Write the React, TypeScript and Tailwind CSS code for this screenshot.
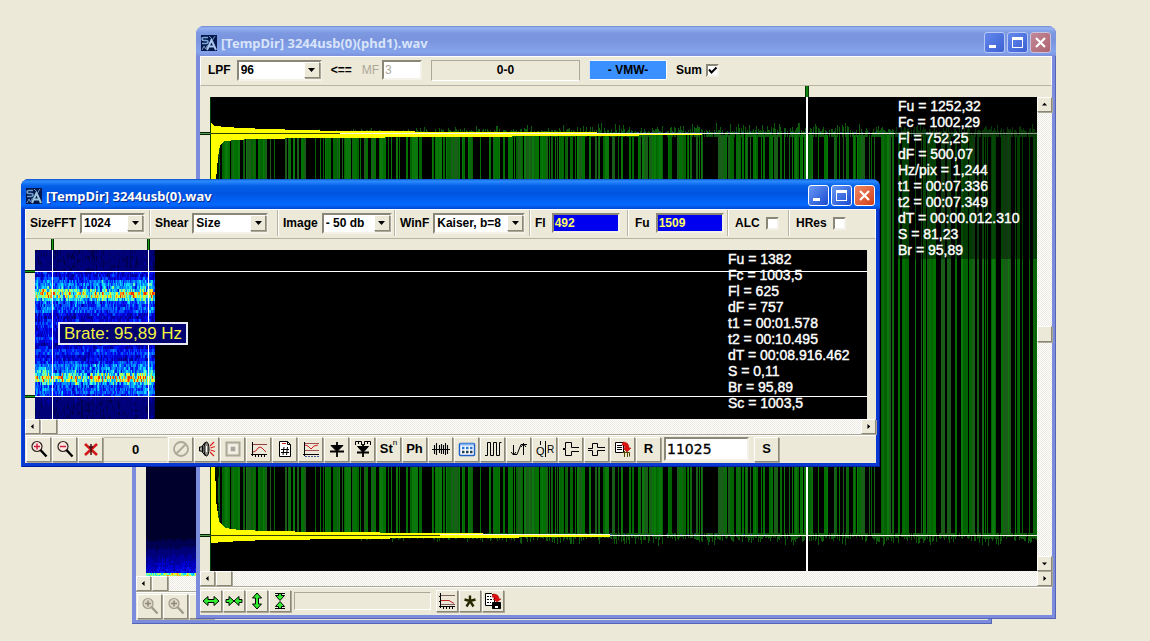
import React, { useId, useMemo } from 'react';

const raised = 'border border-t-white border-l-white border-r-[#8c8878] border-b-[#8c8878] bg-[#ece9d8] shadow-[1px_1px_0_#aca899]';
const sunken = 'border-2 border-t-[#8a8778] border-l-[#8a8778] border-r-[#f4f2e8] border-b-[#f4f2e8]';
const track = 'bg-[repeating-conic-gradient(#ffffff_0_25%,#ece9e0_0_50%)] bg-[length:2px_2px]';

function makeRandom(seed: number) {
  let s = seed;
  return () => {
    s = (s * 1664525 + 1013904223) % 4294967296;
    return s / 4294967296;
  };
}

/* ---------- drawings ---------- */

const HEAT = ['#00002c', '#000050', '#000078', '#0000a0', '#0000d0', '#0018f8', '#0058ff', '#0098ff', '#10d8ff', '#60ffc0', '#a8ff60', '#f0f020', '#ff9010', '#f03000'];

function heatPaths(width: number, height: number, cell: number, seed: number, level: (y: number, r: number, col: number) => number) {
  const rnd = makeRandom(seed);
  const paths: string[] = HEAT.map(() => '');
  let col = 0.5;
  const previous: number[] = [];
  for (let x = 0; x < width; x += 1) {
    col = col * 0.35 + rnd() * 0.65;
    for (let y = 0; y < height; y += cell) {
      const r = (previous[y] ?? 0.5) * 0.4 + rnd() * 0.6;
      previous[y] = r;
      const v = level(y, r, col);
      const i = Math.max(0, Math.min(HEAT.length - 1, Math.round(v * (HEAT.length - 1))));
      paths[i] += `M${x} ${y}h1v${cell}h-1z`;
    }
  }
  return paths;
}

const bump = (y: number, c: number, w: number) => Math.exp(-((y - c) * (y - c)) / (2 * w * w));

function Spectrogram() {
  const paths = useMemo(
    () =>
      heatPaths(120, 169, 3, 77, (y, r, col) => {
        const core = bump(y, 42, 4) + bump(y, 126, 4);
        const halo = bump(y, 43, 10) + bump(y, 127, 10);
        const quiet = y < 21 || y > 145;
        const floor = quiet ? 0.14 : 0.34;
        const stripe = quiet ? 0 : 0.06 * Math.sin(y / 2.2);
        return floor + stripe + halo * (0.08 + 0.26 * col) + core * (0.02 + 0.42 * r) + (r - 0.5) * (quiet ? 0.1 : 0.32) + (col - 0.5) * 0.08;
      }),
    []
  );
  return (
    <svg className="block h-full w-[120px]" viewBox="0 0 120 169" preserveAspectRatio="none" shapeRendering="crispEdges" aria-hidden="true">
      {paths.map((d, i) => (
        <path key={i} d={d} fill={HEAT[i]} />
      ))}
    </svg>
  );
}

function DarkSpectrogram() {
  const paths = useMemo(
    () =>
      heatPaths(60, 169, 2, 19, (y, r, col) => {
        const rise = Math.max(0, (y - 130) / 37);
        return 0.02 + rise * (0.26 + col * 0.12) + rise * (r - 0.4) * 0.2 + (y > 165 ? 0.28 + r * 0.2 : 0);
      }),
    []
  );
  return (
    <svg className="block h-full w-[60px]" viewBox="0 0 60 169" preserveAspectRatio="none" shapeRendering="crispEdges" aria-hidden="true">
      {paths.map((d, i) => (
        <path key={i} d={d} fill={HEAT[i]} />
      ))}
    </svg>
  );
}

const GREENS = ['#007000', '#185e18', '#006400', '#0a780a'];

function Waveform() {
  const { bars, tips } = useMemo(() => {
    const rnd = makeRandom(4242);
    const b = GREENS.map(() => '');
    let t = '';
    let on = false;
    let tone = 0;
    for (let x = 8; x < 827; x += 1) {
      const density = 0.56 + 0.16 * Math.sin(x / 17) + 0.12 * Math.sin(x / 6.3 + 1);
      const stay = rnd() < 0.3;
      if (!stay) {
        on = rnd() < density;
        tone = Math.floor(rnd() * GREENS.length);
      }
      if (on) b[tone] += `M${x} 38h1V438h-1z`;
      const amp = Math.min(1, x / 380);
      if (rnd() < 0.75) {
        const up = Math.round(1 + rnd() * rnd() * 10 * amp);
        const down = Math.round(1 + rnd() * rnd() * 10 * amp);
        t += `M${x} ${36 - up}h1V40h-1zM${x} 436h1V${439 + down}h-1z`;
      }
    }
    return { bars: b, tips: t };
  }, []);
  return (
    <svg className="block h-full w-full" viewBox="0 0 827 474" preserveAspectRatio="none" shapeRendering="crispEdges" aria-hidden="true">
      <path d={tips} fill="#0d5a0d" />
      {bars.map((d, i) => (
        <path key={i} d={d} fill={GREENS[i]} />
      ))}
      <path d="M0 60h9v320H0z" fill="#001400" />
      <rect x="685" y="0" width="142" height="162" fill="#000" opacity="0.4" />
      <path
        d="M0 25L5 29 30 31 90 33 130 34 280 35 492 36V38L240 40 110 41 40 42 15 44 10 48 8 60 6 83 5 200V363L6 403 9 425 15 431 30 433 60 434 110 435 230 436 400 438V440L220 441 140 442 60 443 30 444 0 446Z"
        fill="#ffff00"
      />
      <path d="M10.500 49L9 62 7.500 84V400L9.500 424" fill="none" stroke="#001800" strokeDasharray="2 1" />
      <path d="M0 0V474" stroke="#003c00" strokeWidth="1" />
      <path d="M0 36.500H130M0 438.500H230" stroke="#34400c" />
      <path d="M130 36.500H685M230 437.500H400M400 438.500H827" stroke="#f4f4e4" />
      <path d="M420 35.500H685M400 437.500H560" stroke="#3048b0" strokeDasharray="2 5" opacity="0.7" />
      <path d="M685 36.500H827" stroke="#8c988c" />
      <path d="M597 0V474" stroke="#ffffff" strokeWidth="2" />
    </svg>
  );
}

function AppIcon({ dim }: { dim?: boolean }) {
  return (
    <svg className="size-4 shrink-0" viewBox="0 0 16 16" fill="none" aria-hidden="true">
      <rect width="16" height="16" fill="#04184c" />
      <path d="M7 2.500H3Q1 2.500 1 4T3 5.500H5Q7 5.500 7 7T5 8.500H1" stroke={dim ? '#7ea8d8' : '#6c9cc8'} strokeWidth="1.500" />
      <path d="M6 15L10.500 5 15 15M8 11.500h5" stroke={dim ? '#a8c4ec' : '#9cc4dc'} strokeWidth="2" />
      <path d="M1 15L3 11 4.500 14 6.500 10M8 1l3 3M14 1l-2.500 4" stroke="#7098c0" />
    </svg>
  );
}

function Icon({ children }: { children: React.ReactNode }) {
  return (
    <svg className="size-[18px]" viewBox="0 0 18 18" fill="none" stroke="#000" strokeWidth="1" aria-hidden="true">
      {children}
    </svg>
  );
}

const Magnifier = ({ plus, off }: { plus?: boolean; off?: boolean }) => (
  <Icon>
    <circle cx="7" cy="6.500" r="5" stroke={off ? '#a09c8c' : '#302020'} fill={off ? '#dcd8c8' : '#fbe6e0'} strokeWidth="1.200" />
    <path d={plus || off ? 'M4 6.500h6M7 3.500v6' : 'M4 6.500h6'} stroke={off ? '#8c8878' : '#d02040'} strokeWidth="1.500" />
    <path d="M10.500 10L16.500 16.500" stroke={off ? '#a09c8c' : '#000'} strokeWidth="2.400" />
  </Icon>
);

const icons: Record<string, React.ReactNode> = {
  delete: (
    <Icon>
      <path d="M3 4L15 15M15 4L3 15" stroke="#d01818" strokeWidth="2.600" />
      <path d="M9 4v11M7 7h4" stroke="#401010" strokeWidth="1.500" />
    </Icon>
  ),
  ban: (
    <Icon>
      <circle cx="9" cy="9" r="7" stroke="#aca899" strokeWidth="1.800" />
      <path d="M4 14L14 4" stroke="#aca899" strokeWidth="1.800" />
    </Icon>
  ),
  speaker: (
    <Icon>
      <path d="M1.500 7h2l4-5v14l-4-5h-2z" fill="#a8a8a0" />
      <path d="M4.500 6v6" />
      <ellipse cx="8.500" cy="9" rx="2.500" ry="7" fill="#888880" />
      <path d="M8.500 6v6" stroke="#fff" />
      <path d="M12 6l4-4M12.500 8l4.500-1.500M12.500 10l4.500 1.500M12 12l4 4" stroke="#e02020" strokeWidth="1.200" />
    </Icon>
  ),
  stop: (
    <Icon>
      <rect x="2.500" y="2.500" width="13" height="13" stroke="#aca899" strokeWidth="2" />
      <rect x="6" y="6" width="6" height="6" stroke="#fff" fill="#aca899" />
    </Icon>
  ),
  curveUp: (
    <Icon>
      <path d="M2.500 2v14M1 14.500h16M5.500 14v3M8.500 14v3M11.500 14v3M14.500 14v3" />
      <path d="M3 4.500h14" stroke="#904040" />
      <path d="M3 12q3 0 5-4 2-2 4 0l4 4" stroke="#c02020" />
    </Icon>
  ),
  docHash: (
    <Icon>
      <path d="M3.500 1.500h8l3 3v12h-11z" fill="#fff" />
      <path d="M11.500 1.500v3h3" />
      <path d="M5 9.500h8M5 12.500h8M8 7l-1 8M11.500 7l-1 8" />
      <path d="M6 3.500h4" stroke="#d02020" />
    </Icon>
  ),
  curveDown: (
    <Icon>
      <path d="M2.500 2v14M1 14.500h16" />
      <path d="M3 16.500h14" stroke="#405890" strokeDasharray="2 1" />
      <path d="M3 3.500h14M3 10.500h14" stroke="#a05050" />
      <path d="M3 5l3 1 3 3 3-3 4-1" stroke="#d02020" />
    </Icon>
  ),
  diode: (
    <Icon>
      <path d="M9 2v15M2 11.500h14" strokeWidth="1.800" />
      <path d="M3 5.500h12l-6 6z" fill="#000" />
    </Icon>
  ),
  diodes: (
    <Icon>
      <path d="M1.500 5V1.500h6V5M4.500 1v3M10.500 5V1.500h6V5M13.500 1v3" />
      <path d="M9 4v13M3 12.500h12" strokeWidth="1.800" />
      <path d="M3.500 6.500h11l-5.500 6z" fill="#000" />
    </Icon>
  ),
  wave: (
    <Icon>
      <path d="M0 9.500h18M2.500 5v9M4.500 3v12M7.500 5v8M9.500 4v10M11.500 5v9M13.500 3v12M15.500 5v9" strokeWidth="1.100" />
    </Icon>
  ),
  table: (
    <Icon>
      <rect x="1.500" y="3.500" width="15" height="12" rx="1" fill="#fff" stroke="#2060c8" strokeWidth="1.500" />
      <path d="M2 4.500h14" stroke="#80b0f0" strokeWidth="2" />
      <path d="M4 8h2.500M8 8h2.500M12 8h2.500" stroke="#2878d8" strokeWidth="2.400" />
      <path d="M4 12h2.500M8 12h2.500M12 12h2.500" stroke="#203c50" strokeWidth="2.400" />
    </Icon>
  ),
  pulses: (
    <Icon>
      <path d="M1 15.500h2.500v-13h3v13h3v-13h3v13h3v-13h2" />
    </Icon>
  ),
  arrows: (
    <Icon>
      <path d="M3.500 5v10M1 12l2.500 3L6 12M3 14.500h4L11 4.500h6M13.500 15V3M11 7l2.500-3 2.500 3" />
    </Icon>
  ),
  iq: (
    <Icon>
      <path d="M4.500 1v4M9.500 1v16" />
      <text x="0" y="15" fontSize="11" fontWeight="400" stroke="none" fill="#000" fontFamily="Liberation Sans, sans-serif">Q</text>
      <text x="11" y="13" fontSize="10" fontWeight="400" stroke="none" fill="#000" fontFamily="Liberation Sans, sans-serif">R</text>
    </Icon>
  ),
  stepUp: (
    <Icon>
      <path d="M1 8.500h2.500v-6h6v5H17M1 9.500h2.500v6h6v-4H17" />
    </Icon>
  ),
  stepDown: (
    <Icon>
      <path d="M0 8.500h4.500v-5h5v4H17M0 10.500h4.500v5h5v-5H17" />
    </Icon>
  ),
  copy: (
    <Icon>
      <path d="M1.500 2.500h8v10h-8z" fill="#fff" />
      <path d="M3 5.500h5M3 7.500h5M3 9.500h5" />
      <path d="M9 2q6 0 6 6h2l-4 4-4-4h2q0-3-3-3z" fill="#e01010" stroke="#a00000" strokeWidth="0.500" />
      <path d="M8.500 12.500h7v4M10.500 11v6M13.500 12v5" stroke="#504800" />
    </Icon>
  ),
  save: (
    <Icon>
      <path d="M1.500 1.500h6l3 3v9h-9z" fill="#fff" />
      <path d="M3 4.500h4M3 7.500h5M3 10.500h4" strokeDasharray="2 1" />
      <path d="M9 2q6 0 6 5h2l-4 3-4-3h2q0-2-3-2z" fill="#e01010" stroke="#a00000" strokeWidth="0.500" />
      <path d="M8.500 10.500h8v6h-8z" fill="#000" />
      <path d="M11 15h3" stroke="#fff" strokeWidth="2" />
    </Icon>
  ),
  plot: (
    <Icon>
      <path d="M2.500 1v15M1 14.500h16M1 4.500h2M1 9.500h2M5.500 14v3M8.500 14v3M11.500 14v3M14.500 14v3" />
      <path d="M3 3.500h14M3 12.500h14" stroke="#806060" />
      <path d="M3 8.500h8l5 3" stroke="#c02020" />
    </Icon>
  ),
  star: (
    <Icon>
      <path d="M9 9V3.500M9 9L3.500 7.500M9 9l5.500-1.500M9 9l-3.500 5.500M9 9l3.500 5.500" stroke="#282800" strokeWidth="2.400" />
    </Icon>
  ),
  widen: (
    <Icon>
      <path d="M1 9l5-4.500V7.500h6V4.500L17 9l-5 4.500v-3H6v3z" fill="#30f030" />
    </Icon>
  ),
  narrow: (
    <Icon>
      <path d="M1 7.500h3V4.500L9 9l-5 4.500v-3H1zM17 7.500h-3V4.500L9 9l5 4.500v-3h3z" fill="#30f030" />
    </Icon>
  ),
  heighten: (
    <Icon>
      <path d="M9 1l4.500 5h-3v6h3L9 17l-4.500-5h3V6h-3z" fill="#30f030" />
    </Icon>
  ),
  lower: (
    <Icon>
      <path d="M7.500 1.500v2h-3L9 8.500l4.500-5h-3v-2zM7.500 16.500v-2h-3L9 9.500l4.500 5h-3v2z" fill="#30f030" />
      <path d="M4 1.500h10M4 16.500h10" />
    </Icon>
  ),
};

/* ---------- controls ---------- */

function Combo({ label, value, className }: { label: string; value: string; className: string }) {
  const id = useId();
  return (
    <>
      <label htmlFor={id}>{label}</label>
      <span className={`relative block h-[21px] ${sunken} ${className}`}>
        <select id={id} defaultValue={value} className="block h-[17px] w-full appearance-none bg-white pl-[2px] leading-[17px] outline-none">
          <option>{value}</option>
        </select>
        <span className={`pointer-events-none absolute right-0 top-0 flex h-4 w-4 items-center justify-center ${raised}`}>
          <svg className="h-1 w-[7px]" viewBox="0 0 7 4" aria-hidden="true"><path d="M0 0h7L3.500 4z" fill="#000" /></svg>
        </span>
      </span>
    </>
  );
}

function Field({ label, value, className, disabled }: { label: string; value: string; className: string; disabled?: boolean }) {
  const id = useId();
  return (
    <>
      <label htmlFor={id} className={disabled ? 'font-normal text-[#aca899]' : ''}>{label}</label>
      <input id={id} defaultValue={value} disabled={disabled} className={`h-5 min-w-0 pl-px outline-none ${sunken} ${className}`} />
    </>
  );
}

function Check({ label, checked, className }: { label: string; checked?: boolean; className?: string }) {
  return (
    <label className={`flex items-center ${className ?? ''}`}>
      {label}
      <span className="relative block size-[13px]">
        <input type="checkbox" defaultChecked={checked} className={`peer block size-[13px] appearance-none bg-white ${sunken}`} />
        <svg className="pointer-events-none absolute inset-0 hidden size-[13px] peer-checked:block" viewBox="0 0 13 13" aria-hidden="true">
          <path d="M3 5.500l2.500 3L10.500 3.500" fill="none" stroke="#000" strokeWidth="2" />
        </svg>
      </span>
    </label>
  );
}

function ToolButton({ name, children, small, disabled }: { name: string; children: React.ReactNode; small?: boolean; disabled?: boolean }) {
  return (
    <button
      type="button"
      aria-label={name}
      disabled={disabled}
      className={`flex shrink-0 items-center justify-center text-[13px] font-bold ${raised} ${small ? 'h-[22px] w-[22px]' : 'h-[25px] w-[25px]'}`}
    >
      {children}
    </button>
  );
}

const ARROWS = { left: 'M5 0v7L1 3.500z', right: 'M2 0v7l4-3.500z', up: 'M0 5h7L3.500 1z', down: 'M0 2h7L3.500 6z' };

function ScrollArrow({ dir }: { dir: keyof typeof ARROWS }) {
  return (
    <button type="button" aria-label={`Scroll ${dir}`} className={`flex size-[15px] shrink-0 items-center justify-center ${raised}`}>
      <svg className="size-[5px]" viewBox="0 0 7 7" aria-hidden="true"><path d={ARROWS[dir]} fill="#000" /></svg>
    </button>
  );
}

function HScroll() {
  return (
    <div className={`flex h-[15px] items-center ${track}`}>
      <ScrollArrow dir="left" />
      <div className={`ml-px h-[15px] w-4 ${raised}`} />
      <div className="flex-1" />
      <ScrollArrow dir="right" />
    </div>
  );
}

function CaptionButtons({ active }: { active?: boolean }) {
  const base = 'flex size-[21px] items-center justify-center rounded-[3px] border';
  const blue = active ? 'border-white bg-linear-to-br from-[#6a98f4] to-[#1c48d0]' : 'border-[#b8c8f4] bg-linear-to-br from-[#6488ec] to-[#3c60d4]';
  const red = active ? 'border-white bg-linear-to-br from-[#f08860] to-[#d03c14]' : 'border-[#c8c0dc] bg-linear-to-br from-[#c08898] to-[#b06470]';
  return (
    <div className="flex gap-[2px]">
      <button type="button" aria-label="Minimize" className={`${base} ${blue}`}>
        <svg className="size-[17px]" viewBox="0 0 17 17" aria-hidden="true"><path d="M3 11h7v3H3z" fill="#fff" /></svg>
      </button>
      <button type="button" aria-label="Maximize" className={`${base} ${blue}`}>
        <svg className="size-[17px]" viewBox="0 0 17 17" aria-hidden="true"><path d="M3 3h11v11H3zM4 6v7h9V6z" fill="#fff" fillRule="evenodd" /></svg>
      </button>
      <button type="button" aria-label="Close" className={`${base} ${red}`}>
        <svg className="size-[17px]" viewBox="0 0 17 17" aria-hidden="true"><path d="M4 4l9 9M13 4l-9 9" stroke="#fff" strokeWidth="2.200" /></svg>
      </button>
    </div>
  );
}

function Window({ title, active, className, children }: { title?: string; active?: boolean; className: string; children: React.ReactNode }) {
  const frame = active ? 'bg-[#0839d0] shadow-[inset_1px_0_0_#0a50e8,inset_-1px_-1px_0_#001ea0]' : 'bg-[#7b8cdc] shadow-[inset_-1px_-1px_0_#5564b8]';
  const bar = active
    ? 'bg-[linear-gradient(#0a50c8_0,#2c8cff_2px,#0560e8_7px,#0054e0_14px,#0468ff_26px,#0048d0_30px)] text-white [text-shadow:1px_1px_0_#06288c]'
    : 'bg-[linear-gradient(#7088d0_0,#98b4f4_2px,#7c98e0_7px,#7a94de_14px,#84a4ec_26px,#7c90dc_30px)] text-[#d8e4fa]';
  return (
    <section className={`absolute rounded-t-lg ${frame} ${className}`}>
      <header className={`flex h-[30px] items-center rounded-t-lg pl-[5px] pr-[5px] pt-[3px] ${bar}`}>
        {title && <AppIcon dim={!active} />}
        <h2 className="ml-[4px] flex-1 font-['Noto_Sans',sans-serif] text-[13px] font-bold leading-5">{title}</h2>
        <CaptionButtons active={active} />
      </header>
      <div className="mx-1 bg-[#ece9d8] text-black">{children}</div>
      <div className="h-1" />
    </section>
  );
}

function Readout({ lines }: { lines: string[] }) {
  return (
    <ul className="absolute right-0 top-px w-[139px] whitespace-nowrap text-[14px] font-normal leading-4 text-white [-webkit-text-stroke:0.4px_#fff]">
      {lines.map((l) => (
        <li key={l}>{l}</li>
      ))}
    </ul>
  );
}

const toolbar = 'flex h-[30px] items-center border border-t-white border-l-white border-r-white border-b-[#b8b4a4] pb-[2px]';
const group = 'flex h-[26px] shrink-0 items-center border-r border-[#b8b4a4] shadow-[1px_0_0_#fff]';
const bottomBar = 'flex h-[29px] items-center border-t border-[#aca899] shadow-[inset_0_1px_0_#fff]';

const lower: [string, React.ReactNode, boolean?][] = [
  ['Off', icons.ban, true],
  ['Sound', icons.speaker],
  ['Stop', icons.stop, true],
  ['Spectrum', icons.curveUp],
  ['Numbers', icons.docHash],
  ['Response', icons.curveDown],
  ['Detector', icons.diode],
  ['Multi detector', icons.diodes],
  ['Power', <span key="s" className="flex items-center"><span>St</span><span className="self-start text-[8px] font-normal leading-[8px]">n</span></span>],
  ['Phase', 'Ph'],
  ['Wave', icons.wave],
  ['Table', icons.table],
  ['Pulses', icons.pulses],
  ['Shift', icons.arrows],
  ['IQ', icons.iq],
  ['Step up', icons.stepUp],
  ['Step down', icons.stepDown],
  ['Copy', icons.copy],
];

export default function App() {
  return (
    <main className="relative min-h-screen overflow-hidden bg-[#ece9d8] font-['Liberation_Sans',Arial,sans-serif] text-[12px] font-bold text-black">
      <Window className="left-[132px] top-[336px] w-[860px]">
        <div className="h-[30px]" />
        <div className="h-[180px] pl-[10px] pr-[9px] pt-[11px]">
          <div className="h-full bg-black"><DarkSpectrogram /></div>
        </div>
        <HScroll />
        <div className={`${bottomBar} gap-px pl-px`}>
          <ToolButton name="Zoom in" disabled><Magnifier off /></ToolButton>
          <ToolButton name="Zoom out" disabled><Magnifier off /></ToolButton>
          <ToolButton name="Delete" disabled>{null}</ToolButton>
        </div>
      </Window>

      <Window title="[TempDir] 3244usb(0)(phd1).wav" className="left-[196px] top-[26px] w-[860px]">
        <div className={`${toolbar} pl-[7px]`}>
          <div className="flex items-center gap-[6px]">
            <Combo label="LPF" value="96" className="w-[85px]" />
          </div>
          <span className="ml-[9px]">&lt;==</span>
          <div className="ml-[10px] flex items-center gap-[3px]">
            <Field label="MF" value="3" disabled className="w-[40px] bg-white font-normal text-[#aca899]" />
          </div>
          <output className="ml-[9px] h-[21px] w-[149px] border border-b-white border-l-[#aca899] border-r-[#aca899] border-t-[#aca899] text-center leading-[19px]">0-0</output>
          <button type="button" className="ml-[9px] h-5 w-[78px] border border-b-white border-l-[#d8e4f0] border-r-white border-t-[#f4f4f4] bg-[#3b90ff] leading-[18px]">- VMW-</button>
          <Check label="Sum" checked className="ml-[9px] gap-[4px]" />
        </div>
        <div className="relative flex h-[485px] pl-[10px] pt-[11px]">
          <div className="relative min-w-0 flex-1 bg-black">
            <Waveform />
            <Readout lines={['Fu = 1252,32', 'Fc = 1002,29', 'Fl = 752,25', 'dF = 500,07', 'Hz/pix = 1,244', 't1 = 00:07.336', 't2 = 00:07.349', 'dT = 00:00.012.310', 'S = 81,23', 'Br = 95,89']} />
          </div>
          <div className={`flex w-[15px] flex-col ${track}`}>
            <ScrollArrow dir="up" />
            <div className="flex-1" />
            <div className={`h-4 ${raised}`} />
            <div className="flex-1" />
            <ScrollArrow dir="down" />
          </div>
          <span className="absolute left-[605px] top-0 h-[11px] w-1 border-x border-[#003800] bg-[#108010]" />
          <span className="absolute left-0 top-[46px] h-[3px] w-[10px] border-y border-[#002000] bg-[#58a058]" />
          <span className="absolute left-0 top-[448px] h-[3px] w-[10px] border-y border-[#002000] bg-[#58a058]" />
        </div>
        <HScroll />
        <div className={`${bottomBar} gap-px`}>
          <ToolButton small name="Stretch horizontally">{icons.widen}</ToolButton>
          <ToolButton small name="Shrink horizontally">{icons.narrow}</ToolButton>
          <ToolButton small name="Stretch vertically">{icons.heighten}</ToolButton>
          <ToolButton small name="Shrink vertically">{icons.lower}</ToolButton>
          <div className="mx-[2px] h-[18px] w-[137px] border border-b-white border-l-[#aca899] border-r-white border-t-[#aca899]" />
          <div className="w-px" />
          <ToolButton small name="Plot">{icons.plot}</ToolButton>
          <ToolButton small name="Mark">{icons.star}</ToolButton>
          <ToolButton small name="Save">{icons.save}</ToolButton>
        </div>
      </Window>

      <Window active title="[TempDir] 3244usb(0).wav" className="left-[21px] top-[179px] w-[859px]">
        <div className={toolbar}>
          <div className={`${group} w-[124px] gap-1 pl-1`}><Combo label="SizeFFT" value="1024" className="w-[65px]" /></div>
          <div className={`${group} w-[128px] gap-1 pl-[5px]`}><Combo label="Shear" value="Size" className="w-[76px]" /></div>
          <div className={`${group} w-[117px] gap-1 pl-[5px]`}><Combo label="Image" value="- 50 db" className="w-[70px]" /></div>
          <div className={`${group} w-[135px] gap-1 pl-[5px]`}><Combo label="WinF" value="Kaiser, b=8" className="w-[92px]" /></div>
          <div className={`${group} w-[98px] gap-[6px] pl-[5px]`}><Field label="Fl" value="492" className="w-[68px] bg-[#0000f0] text-[#ffff60]" /></div>
          <div className={`${group} w-[100px] gap-[6px] pl-[7px]`}><Field label="Fu" value="1509" className="w-[68px] bg-[#0000f0] text-[#ffff60]" /></div>
          <div className={`${group} w-[61px] pl-[7px]`}><Check label="ALC" className="gap-[6px]" /></div>
          <Check label="HRes" className="gap-[6px] pl-[7px]" />
        </div>
        <div className="relative h-[180px] pl-[10px] pr-[9px] pt-[11px]">
          <div className="relative h-full bg-black">
            <Spectrogram />
            <span className="absolute left-0 top-[21px] h-px w-full bg-white" />
            <span className="absolute left-0 top-[146px] h-px w-full bg-white" />
            <span className="absolute left-[17px] top-0 h-full w-px bg-white" />
            <span className="absolute left-[113px] top-0 h-full w-px bg-white" />
            <Readout lines={['Fu = 1382', 'Fc = 1003,5', 'Fl = 625', 'dF = 757', 't1 = 00:01.578', 't2 = 00:10.495', 'dT = 00:08.916.462', 'S = 0,11', 'Br = 95,89', 'Sc = 1003,5']} />
            <div role="tooltip" className="absolute left-[23px] top-[72px] h-[23px] whitespace-nowrap border-2 border-[#e8e8f4] bg-[#000070] px-1 text-[17px] font-normal leading-[19px] text-[#f4f440]">
              Brate: 95,89 Hz
            </div>
          </div>
          <span className="absolute left-[26px] top-0 h-[11px] w-[3px] border-x border-[#002800] bg-[#18a018]" />
          <span className="absolute left-[122px] top-0 h-[11px] w-[3px] border-x border-[#002800] bg-[#18a018]" />
          <span className="absolute left-0 top-[31px] h-[3px] w-[10px] border-y border-[#002800] bg-[#18a018]" />
          <span className="absolute left-0 top-[156px] h-[3px] w-[10px] border-y border-[#002800] bg-[#18a018]" />
        </div>
        <HScroll />
        <div className={`${bottomBar} gap-px pl-px`}>
          <ToolButton name="Zoom in"><Magnifier plus /></ToolButton>
          <ToolButton name="Zoom out"><Magnifier /></ToolButton>
          <ToolButton name="Delete">{icons.delete}</ToolButton>
          <output className="h-[25px] w-[63px] border-y border-b-[#c8c4b4] border-t-[#c8c4b4] text-center text-[13px] leading-6">0</output>
          {lower.map(([name, icon, off]) => (
            <ToolButton key={name} name={name} disabled={off}>{icon}</ToolButton>
          ))}
          <ToolButton name="R">R</ToolButton>
          <input aria-label="Sample rate" defaultValue="11025" className={`ml-[2px] mr-1 h-6 w-[85px] bg-white pl-px font-['DejaVu_Sans',sans-serif] text-[14px] font-normal outline-none [-webkit-text-stroke:0.3px_#000] ${sunken}`} />
          <ToolButton name="S">S</ToolButton>
        </div>
      </Window>
    </main>
  );
}
